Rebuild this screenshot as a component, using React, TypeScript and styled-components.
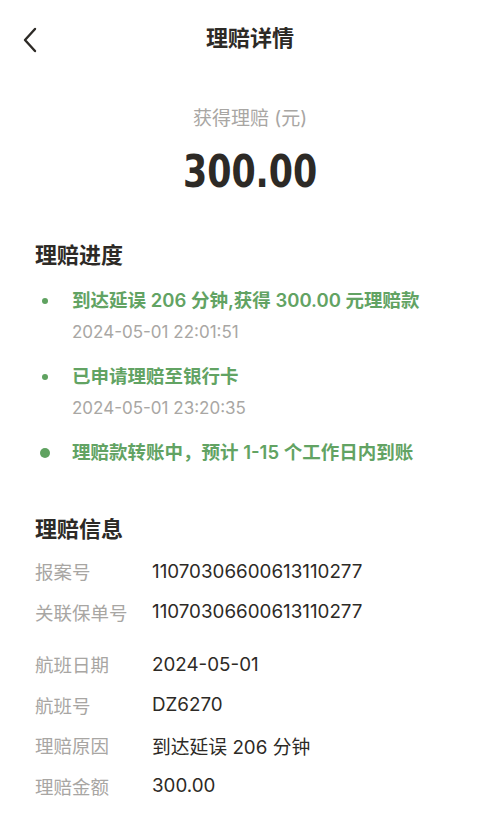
import styled, { createGlobalStyle } from 'styled-components';

const GlobalStyle = createGlobalStyle`
    html, body {
        margin: 0;
        padding: 0;
        background: #ffffff;
    }
    body {
        font-family: "Inter", "Noto Sans CJK SC", "Noto Sans", sans-serif;
        color: #2d2a26;
    }
`

const Page = styled.div`
    width: 500px;
    min-height: 837px;
    background: #fff;
`

const Header = styled.div`
    position: relative;
    height: 80px;
    display: flex;
    align-items: center;
    justify-content: center;

    h1 {
        margin: 0;
        font-size: 22px;
        font-weight: 700;
        color: #2d2a26;
        line-height: 1;
        transform: translateY(-2px);
    }
`

const BackBtn = styled.button`
    position: absolute;
    left: 14px;
    top: 24px;
    width: 32px;
    height: 32px;
    padding: 0;
    border: none;
    background: none;
    display: flex;
    align-items: center;
    justify-content: center;
`

const Summary = styled.div`
    display: flex;
    flex-direction: column;
    align-items: center;
    padding-top: 25px;
    padding-bottom: 42px;

    .label {
        font-size: 19px;
        color: #a8a6a3;
        line-height: 28px;
    }
    .amount {
        margin-top: 13px;
        font-family: "DejaVu Sans Condensed", "DejaVu Sans", sans-serif;
        font-size: 45px;
        font-weight: 700;
        color: #2d2a26;
        line-height: 52px;
        transform: scaleX(0.86);
    }
`

const Section = styled.section<{ $top?: number }>`
    padding: 0 35px;
    margin-top: ${p => p.$top ?? 0}px;
`

const SectionTitle = styled.h2`
    margin: 0;
    font-size: 22px;
    font-weight: 700;
    color: #2d2a26;
    line-height: 30px;
`

const Timeline = styled.ul`
    list-style: none;
    margin: 16px 0 0;
    padding: 0;
    display: flex;
    flex-direction: column;
    gap: 18px;
`

const Step = styled.li`
    display: flex;
    flex-direction: column;
    padding-left: 37px;
    position: relative;
`

const Dot = styled.span<{ $big?: boolean }>`
    position: absolute;
    left: ${p => (p.$big ? '5px' : '7px')};
    top: ${p => (p.$big ? '10px' : '12px')};
    width: ${p => (p.$big ? '10px' : '6px')};
    height: ${p => (p.$big ? '10px' : '6px')};
    border-radius: 50%;
    background: #5fa260;
`

const StepText = styled.div`
    font-size: 18.5px;
    font-weight: 600;
    color: #62a363;
    line-height: 28px;
    white-space: nowrap;
`

const StepTime = styled.div`
    font-size: 17px;
    color: #a9a7a4;
    line-height: 24px;
    margin-top: 6px;
`

const InfoList = styled.div`
    margin-top: 7px;
    display: flex;
    flex-direction: column;
`

const InfoRow = styled.div<{ $gapTop?: boolean }>`
    display: flex;
    align-items: center;
    height: 40.5px;
    margin-top: ${p => (p.$gapTop ? '12px' : '0')};

    .k {
        width: 117px;
        font-size: 18.5px;
        color: #a8a6a3;
    }
    .v {
        font-size: 18.8px;
        color: #2d2a26;
    }
`

const steps = [
    { text: '到达延误 206 分钟,获得 300.00 元理赔款', time: '2024-05-01 22:01:51' },
    { text: '已申请理赔至银行卡', time: '2024-05-01 23:20:35' },
    { text: '理赔款转账中，预计 1-15 个工作日内到账', time: '', big: true },
]

const info = [
    { k: '报案号', v: '110703066006131102' + '77' },
    { k: '关联保单号', v: '110703066006131102' + '77' },
    { k: '航班日期', v: '2024-05-01', gap: true },
    { k: '航班号', v: 'DZ6270' },
    { k: '理赔原因', v: '到达延误 206 分钟' },
    { k: '理赔金额', v: '300.00' },
]

function App() {
    return (
        <Page>
            <GlobalStyle />
            <Header>
                <BackBtn aria-label="返回">
                    <svg width="16" height="26" viewBox="0 0 16 26">
                        <path d="M13 2 L3 13 L13 24" fill="none" stroke="#2d2a26" strokeWidth="2.4" strokeLinecap="round" strokeLinejoin="round" />
                    </svg>
                </BackBtn>
                <h1>理赔详情</h1>
            </Header>
            <Summary>
                <div className="label">获得理赔 (元)</div>
                <div className="amount">300.00</div>
            </Summary>
            <Section>
                <SectionTitle>理赔进度</SectionTitle>
                <Timeline>
                    {steps.map((s, i) => (
                        <Step key={i}>
                            <Dot $big={s.big} />
                            <StepText>{s.text}</StepText>
                            {s.time && <StepTime>{s.time}</StepTime>}
                        </Step>
                    ))}
                </Timeline>
            </Section>
            <Section $top={48}>
                <SectionTitle>理赔信息</SectionTitle>
                <InfoList>
                    {info.map((r, i) => (
                        <InfoRow key={i} $gapTop={r.gap}>
                            <span className="k">{r.k}</span>
                            <span className="v">{r.v}</span>
                        </InfoRow>
                    ))}
                </InfoList>
            </Section>
        </Page>
    )
}

export default App
